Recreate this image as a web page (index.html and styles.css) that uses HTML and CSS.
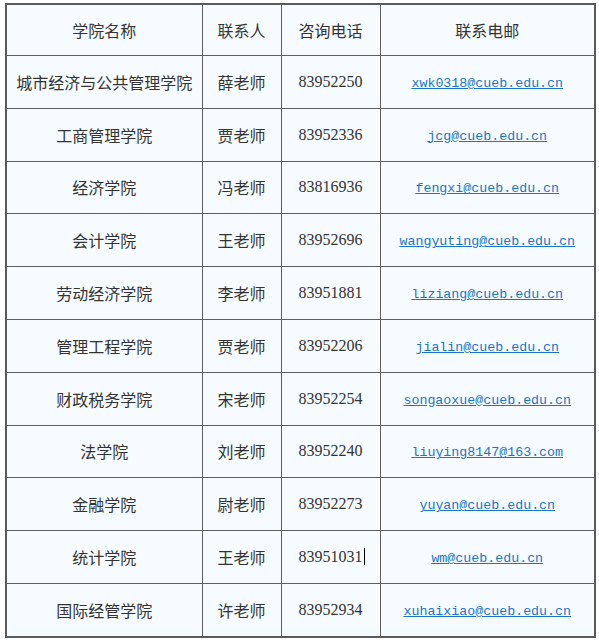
FILE: index.html
```html
<!DOCTYPE html>
<html lang="zh-CN">
<head>
<meta charset="utf-8">
<title>联系方式</title>
<link rel="stylesheet" href="styles.css">
</head>
<body>
<table class="contacts">
  <colgroup>
    <col class="c-name"><col class="c-person"><col class="c-phone"><col class="c-mail">
  </colgroup>
  <tr class="head"><td>学院名称</td><td>联系人</td><td class="phone">咨询电话</td><td>联系电邮</td></tr>
  <tr><td>城市经济与公共管理学院</td><td>薛老师</td><td class="phone num">83952250</td><td><a href="#">xwk0318@cueb.edu.cn</a></td></tr>
  <tr><td>工商管理学院</td><td>贾老师</td><td class="phone num">83952336</td><td><a href="#">jcg@cueb.edu.cn</a></td></tr>
  <tr><td>经济学院</td><td>冯老师</td><td class="phone num">83816936</td><td><a href="#">fengxi@cueb.edu.cn</a></td></tr>
  <tr><td>会计学院</td><td>王老师</td><td class="phone num">83952696</td><td><a href="#">wangyuting@cueb.edu.cn</a></td></tr>
  <tr><td>劳动经济学院</td><td>李老师</td><td class="phone num">83951881</td><td><a href="#">liziang@cueb.edu.cn</a></td></tr>
  <tr><td>管理工程学院</td><td>贾老师</td><td class="phone num">83952206</td><td><a href="#">jialin@cueb.edu.cn</a></td></tr>
  <tr><td>财政税务学院</td><td>宋老师</td><td class="phone num">83952254</td><td><a href="#">songaoxue@cueb.edu.cn</a></td></tr>
  <tr><td>法学院</td><td>刘老师</td><td class="phone num">83952240</td><td><a href="#">liuying8147@163.com</a></td></tr>
  <tr><td>金融学院</td><td>尉老师</td><td class="phone num">83952273</td><td><a href="#">yuyan@cueb.edu.cn</a></td></tr>
  <tr><td>统计学院</td><td>王老师</td><td class="phone num">83951031<span class="caret"></span></td><td><a href="#">wm@cueb.edu.cn</a></td></tr>
  <tr><td>国际经管学院</td><td>许老师</td><td class="phone num">83952934</td><td><a href="#">xuhaixiao@cueb.edu.cn</a></td></tr>
</table>
</body>
</html>
```
FILE: styles.css
```css
html, body {
  margin: 0;
  padding: 0;
  background: #ffffff;
}
body {
  padding: 3px 0 0 5px;
  font-family: "Noto Sans CJK SC", "Noto Sans", sans-serif;
  color: #333333;
}
.contacts {
  border-collapse: collapse;
  width: 589px;
  table-layout: fixed;
  background: #f6fbff;
  border: 2px solid #5a5a5a;
}
.c-name { width: 196px; }
.c-person { width: 79px; }
.c-phone { width: 99px; }
.c-mail { width: 215px; }
.contacts td {
  border: 1px solid #5f5f5f;
  height: 51.8px;
  padding: 0;
  text-align: center;
  vertical-align: middle;
  font-size: 16px;
  line-height: 20px;
  white-space: nowrap;
  overflow: hidden;
}
.contacts .head td {
  height: 50px;
}
.contacts td.phone {
  text-align: left;
  padding-left: 17px;
}
.contacts td.num {
  font-family: "Liberation Serif", "Times New Roman", serif;
  font-size: 16px;
  color: #333333;
}
.contacts a {
  font-family: "Liberation Mono", "Courier New", monospace;
  font-size: 13.3px;
  color: #1a75c6;
  text-decoration: underline;
}
.caret {
  display: inline-block;
  width: 1px;
  height: 17px;
  background: #000000;
  vertical-align: -3px;
  margin-left: 1px;
}
```
